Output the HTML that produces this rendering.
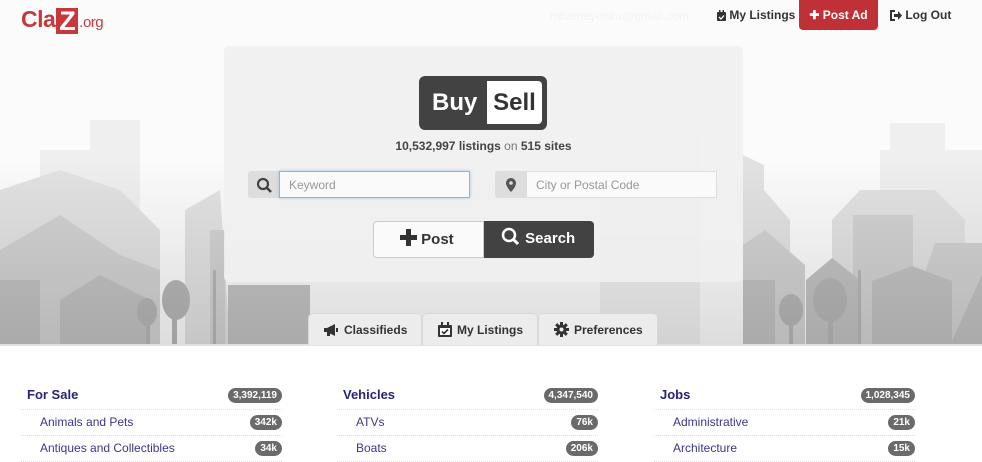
<!DOCTYPE html>
<html><head><meta charset="utf-8"><style>
*{box-sizing:border-box;margin:0;padding:0}
body{width:982px;height:457px;overflow:hidden;background:#fff;font-family:"Liberation Sans",Arial,sans-serif;position:relative}
#hero{position:absolute;left:0;top:0;width:982px;height:345px;background:#fbfbfb}
#hero svg{position:absolute;left:0;top:0}
.shade{position:absolute;left:0;top:0;width:982px;height:345px;background:linear-gradient(to bottom,rgba(0,0,0,0) 45%,rgba(0,0,0,.12) 100%)}
.bottomline{position:absolute;left:0;top:344px;width:982px;height:2px;background:#e2e2e2}
.logo{position:absolute;left:21px;top:6px;font-size:23px;font-weight:bold;color:#c8373c;letter-spacing:-.5px}
.logo .z{display:inline-block;background:#c8373c;color:#fff;width:22px;height:26px;text-align:center;line-height:27px;font-size:27px;vertical-align:-3px;margin:0 1px}
.logo small{font-size:15px;font-weight:normal}
.nav{position:absolute;top:8px;font-size:12px;font-weight:bold;color:#333;white-space:nowrap}
.nav svg{vertical-align:-2px}
.email{position:absolute;left:550px;top:9px;font-size:12px;color:#f3f3f3}
.post{position:absolute;left:799px;top:0;width:79px;height:30px;background:#bf3137;color:#fff;border-radius:0 0 4px 4px;font-size:12px;font-weight:bold;text-align:center;line-height:31px}
.panel{position:absolute;left:224px;top:46px;width:519px;height:236px;background:rgba(240,240,240,.9);border-radius:5px}
.bs{position:absolute;left:419px;top:76px;width:128px;height:54px;background:#424242;border-radius:6px}
.bs .b{position:absolute;left:13px;top:13px;color:#fff;font-size:24px;font-weight:bold}
.bs .s{position:absolute;left:68px;top:5px;width:55px;height:43px;background:#fff;border-radius:0 4px 4px 0;color:#333;font-size:24px;font-weight:bold;text-align:center;line-height:44px}
.stats{position:absolute;left:224px;width:519px;top:139px;text-align:center;font-size:12px;font-weight:bold;color:#444}
.stats span{color:#777;font-weight:normal}
.addon{position:absolute;top:171px;width:31px;height:27px;background:#ddd;border:1px solid #ddd;border-radius:3px 0 0 3px}
.inp{position:absolute;top:171px;height:27px;background:#fafafa;border:1px solid #ddd;font-size:12px;color:#999;padding:6px 9px}
.btn{position:absolute;top:221px;height:37px;font-size:15px;font-weight:bold;line-height:36px}
.tabs div{position:absolute;top:313px;height:32px;background:#ececec;border:1px solid #d8d8d8;border-bottom:none;border-radius:5px 5px 0 0;font-size:12px;font-weight:bold;color:#333;line-height:32px}
.tabs svg{vertical-align:-3px;margin-right:5px}
.col{position:absolute;top:385px;width:261px}
.col .h{height:25px;border-bottom:1px dotted #ddd;color:#27247a;font-weight:bold;font-size:13px;line-height:20px;padding-left:6px;position:relative}
.col .r{height:26px;border-bottom:1px dotted #ddd;color:#3a3690;font-size:12px;line-height:24px;padding-left:19px;position:relative}
.badge{position:absolute;right:0;top:3px;background:#6a6a6a;color:#fff;font-size:10px;font-weight:bold;border-radius:8px;padding:0 5px;height:15px;line-height:15px}
.r .badge{top:5px}
</style></head><body>
<div id="hero">
<svg width="982" height="345" viewBox="0 0 982 345">
<g fill="#efefef">
<polygon points="880,345 880,150 890,150 890,123 945,123 945,150 982,150 982,345"/>
<polygon points="40,345 40,150 90,150 90,120 140,120 140,345"/>
<polygon points="600,345 600,160 640,130 700,130 700,345"/>
</g>
<g fill="#e2e2e2">
<polygon points="743,345 743,155 764,165 764,190 790,220 790,345"/>
<polygon points="832,345 832,220 860,190 935,190 965,220 965,345"/>
<polygon points="0,345 0,190 60,170 120,190 160,230 160,345"/>
<polygon points="185,345 185,210 220,190 230,345"/>
</g>
<g fill="#d2d2d2">
<polygon points="743,345 743,245 765,230 805,265 805,345"/>
<polygon points="853,345 853,215 913,215 913,345"/>
<polygon points="900,345 935,243 982,243 982,345"/>
<polygon points="0,345 0,250 60,215 120,255 160,270 160,345"/>
<polygon points="210,345 210,230 225,230 225,345"/>
</g>
<g fill="#c2c2c2">
<polygon points="743,345 743,280 775,280 775,345"/>
<polygon points="806,345 806,280 832,258 860,280 860,345"/>
<polygon points="872,345 872,281 912,266 952,281 952,345"/>
<polygon points="950,345 982,275 982,345"/>
<polygon points="0,345 0,280 40,280 40,345"/>
<polygon points="60,345 60,300 100,275 150,300 150,345"/>
<polygon points="228,345 228,285 310,285 310,345"/>
</g>
<g fill="#b6b6b6">
<rect x="789" y="295" width="4" height="50"/><ellipse cx="791" cy="310" rx="12" ry="16"/>
<rect x="828" y="295" width="5" height="50"/><ellipse cx="830" cy="300" rx="17" ry="22"/>
<rect x="858" y="270" width="3" height="75"/>
<rect x="172" y="300" width="5" height="45"/><ellipse cx="176" cy="300" rx="14" ry="20"/>
<rect x="146" y="310" width="4" height="35"/><ellipse cx="147" cy="312" rx="10" ry="14"/>
<rect x="213" y="270" width="3" height="75"/>
</g>
</svg>
<div class="shade"></div>
</div>
<div class="bottomline"></div>
<div class="logo">Cla<span class="z">Z</span><small>.org</small></div>
<div class="email">mhamayenka@gmail.com</div>
<div class="nav" style="left:717px"><svg width="9" height="11"><rect x="0" y="2" width="9" height="9" rx="1" fill="#333"/><rect x="2" y="0" width="1.5" height="3" fill="#333"/><rect x="5.5" y="0" width="1.5" height="3" fill="#333"/><path d="M2 7l2 2 3-3.5" stroke="#fff" stroke-width="1.3" fill="none"/></svg> My Listings</div>
<div class="post">✚ Post Ad</div>
<div class="nav" style="left:890px"><svg width="12" height="11"><path d="M5 1H1v9h4" stroke="#333" stroke-width="2" fill="none"/><path d="M4 4h4V1l4 4.5-4 4.5V7H4z" fill="#333"/></svg> Log Out</div>
<div class="panel"></div>
<div class="bs"><div class="b">Buy</div><div class="s">Sell</div></div>
<div class="stats">10,532,997 listings <span>on</span> 515 sites</div>
<div class="addon" style="left:248px"><svg width="31" height="27"><circle cx="14" cy="12" r="5" fill="none" stroke="#444" stroke-width="2.2"/><line x1="18" y1="16" x2="22" y2="20" stroke="#444" stroke-width="2.6"/></svg></div>
<div class="inp" style="left:279px;width:191px;border-color:#8ab4e0;box-shadow:0 0 3px #9cc3ec">Keyword</div>
<div class="addon" style="left:495px"><svg width="31" height="27"><path d="M15 6a5 5 0 0 1 5 5c0 4-5 9-5 9s-5-5-5-9a5 5 0 0 1 5-5z" fill="#555"/><circle cx="15" cy="11" r="1.8" fill="#ddd"/></svg></div>
<div class="inp" style="left:526px;width:191px">City or Postal Code</div>
<div class="btn" style="left:373px;width:111px;background:#fafafa;border:1px solid #ccc;border-radius:4px 0 0 4px;color:#333;padding-left:26px"><svg width="17" height="17" style="vertical-align:-2px"><path d="M6 0h5v6h6v5h-6v6H6v-6H0V6h6z" fill="#333"/></svg> Post</div>
<div class="btn" style="left:484px;width:110px;background:#424242;border-radius:0 4px 4px 0;color:#fff;padding-left:17px"><svg width="20" height="20" style="vertical-align:-4px"><circle cx="8" cy="8" r="6" fill="none" stroke="#fff" stroke-width="2.5"/><line x1="12.5" y1="12.5" x2="17" y2="17" stroke="#fff" stroke-width="3"/></svg> Search</div>
<div class="tabs">
<div style="left:308px;width:114px;padding-left:14px"><svg width="16" height="14"><path d="M1 5h3l8-4v12L4 9H1z" fill="#333"/><rect x="4" y="9" width="3" height="4" fill="#333"/><rect x="13" y="5" width="2" height="4" fill="#333"/></svg>Classifieds</div>
<div style="left:422px;width:116px;padding-left:15px"><svg width="14" height="15"><rect x="0" y="3" width="14" height="12" rx="1" fill="#333"/><rect x="3" y="0" width="2" height="4" fill="#333"/><rect x="9" y="0" width="2" height="4" fill="#333"/><rect x="2" y="6" width="10" height="7" fill="#fff"/><path d="M4 9.5l2 2 4-4" stroke="#333" stroke-width="1.6" fill="none"/></svg>My Listings</div>
<div style="left:538px;width:120px;padding-left:15px"><svg width="15" height="15"><circle cx="7.5" cy="7.5" r="5" fill="#333"/><g stroke="#333" stroke-width="3"><line x1="7.5" y1="0" x2="7.5" y2="15"/><line x1="0" y1="7.5" x2="15" y2="7.5"/><line x1="2.2" y1="2.2" x2="12.8" y2="12.8"/><line x1="12.8" y1="2.2" x2="2.2" y2="12.8"/></g><circle cx="7.5" cy="7.5" r="2" fill="#ececec"/></svg>Preferences</div>
</div>
<div class="col" style="left:21px"><div class="h">For Sale<span class="badge">3,392,119</span></div><div class="r">Animals and Pets<span class="badge">342k</span></div><div class="r">Antiques and Collectibles<span class="badge">34k</span></div></div>
<div class="col" style="left:337px"><div class="h">Vehicles<span class="badge">4,347,540</span></div><div class="r">ATVs<span class="badge">76k</span></div><div class="r">Boats<span class="badge">206k</span></div></div>
<div class="col" style="left:654px"><div class="h">Jobs<span class="badge">1,028,345</span></div><div class="r">Administrative<span class="badge">21k</span></div><div class="r">Architecture<span class="badge">15k</span></div></div>
</body></html>
